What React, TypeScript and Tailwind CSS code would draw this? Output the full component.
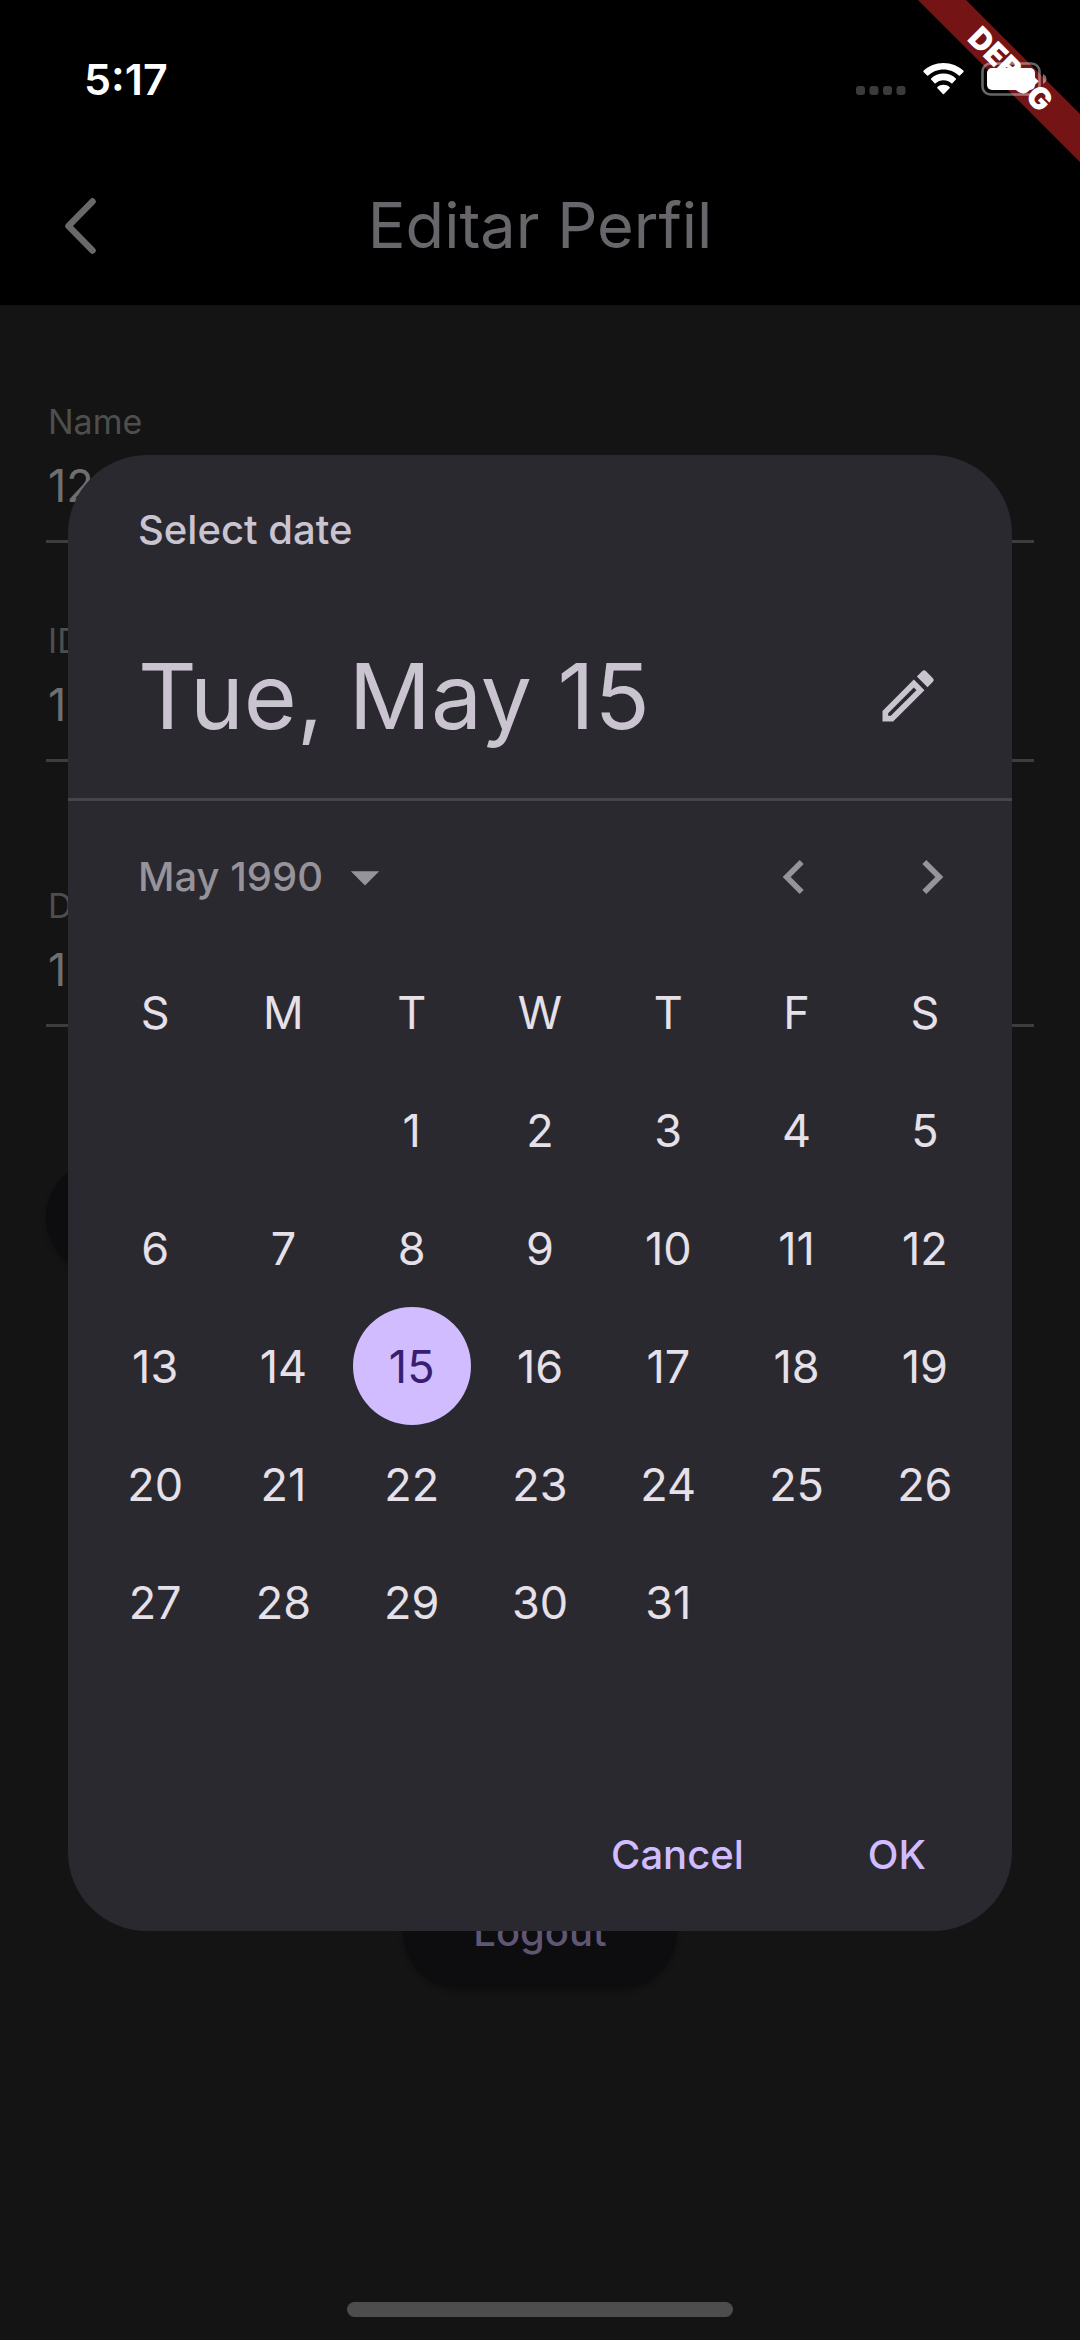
import { useState } from "react";

const WEEKDAYS = ["S", "M", "T", "W", "T", "F", "S"];
const WEEKDAY_NAMES = ["Sunday", "Monday", "Tuesday", "Wednesday", "Thursday", "Friday", "Saturday"];
const FIRST_WEEKDAY = 2;
const DAYS_IN_MONTH = 31;

const WEEKS: (number | null)[][] = Array.from({ length: 5 }, (_, week) =>
  Array.from({ length: 7 }, (_, column) => {
    const day = week * 7 + column - FIRST_WEEKDAY + 1;
    return day >= 1 && day <= DAYS_IN_MONTH ? day : null;
  }),
);

function DebugBanner() {
  return (
    <div className="pointer-events-none absolute top-0 right-0 size-[162px] overflow-hidden">
      <div className="absolute top-[52px] -left-[57px] flex h-[34px] w-[300px] rotate-45 items-center justify-center bg-[#751414] text-[30px] leading-none font-black text-white">
        DEBUG
      </div>
    </div>
  );
}

function StatusBar() {
  return (
    <div className="relative flex h-[146px] items-center justify-between bg-black pt-3 pr-[33px] pl-[84px]">
      <DebugBanner />
      <span className="text-[43px] leading-none font-semibold text-white">5:17</span>
      <div className="relative flex items-center">
        <svg className="mr-4 h-[34px] w-[50px]" viewBox="0 0 50 34" fill="#3b3b3b" aria-hidden="true">
          <rect x="0" y="24" width="9" height="9" rx="3" />
          <rect x="13.5" y="24" width="9" height="9" rx="3" />
          <rect x="27" y="24" width="9" height="9" rx="3" />
          <rect x="40.500" y="24" width="9" height="9" rx="3" />
        </svg>
        <svg className="mr-4 h-[34px] w-[43px]" viewBox="0 0 43 34" fill="#fff" aria-label="Wi-Fi" role="img">
          <path d="M21.500 7.500c5.900 0 11.300 2.300 15.300 6.100.3.300.8.300 1.100 0l3.600-3.700c.3-.3.300-.8 0-1.100C36.300 3.900 29.200 1 21.500 1S6.700 3.900 1.500 8.800c-.3.300-.3.800 0 1.100l3.600 3.700c.3.300.8.300 1.100 0 4-3.800 9.400-6.100 15.300-6.100z" />
          <path d="M21.500 18.300c3 0 5.700 1.100 7.800 3 .3.300.8.300 1.100 0l3.500-3.700c.3-.3.300-.8 0-1.100-3.300-3.100-7.600-4.900-12.400-4.900s-9.100 1.800-12.400 4.900c-.3.300-.3.800 0 1.100l3.500 3.700c.3.300.8.300 1.100 0 2.100-1.900 4.800-3 7.800-3z" />
          <path d="M27.600 26.200c.3-.3.300-.8 0-1.100-1.700-1.500-3.800-2.300-6.100-2.300s-4.400.8-6.100 2.300c-.3.300-.3.800 0 1.100l5.500 5.900c.3.300.8.300 1.100 0z" />
        </svg>
        <svg className="h-[34px] w-[66px]" viewBox="0 0 66 34" aria-label="Battery full" role="img">
          <rect x="1.500" y="1.500" width="57" height="31" rx="8" fill="none" stroke="#fff" strokeOpacity="0.400" strokeWidth="2.600" />
          <rect x="6" y="6" width="48" height="22" rx="5" fill="#fff" />
          <path d="M62 12c2.300 1 3.500 2.800 3.500 5s-1.200 4-3.500 5z" fill="#fff" fillOpacity="0.450" />
        </svg>
      </div>
    </div>
  );
}

function Header() {
  return (
    <header className="grid h-[159px] grid-cols-[160px_1fr_160px] items-center bg-black">
      <button type="button" aria-label="Back" className="flex h-full items-center pl-16">
        <svg className="h-14 w-9" viewBox="0 0 36 56" fill="none" stroke="#6a686b" strokeWidth="6.500" strokeLinecap="round" strokeLinejoin="round" aria-hidden="true">
          <path d="M28.500 3.500 4.500 28l24 24.500" />
        </svg>
      </button>
      <h1 className="text-center text-[63px] leading-none font-normal text-[#68666a]">Editar Perfil</h1>
    </header>
  );
}

function Field({ id, label, value }: { id: string; label: string; value: string }) {
  return (
    <div className="border-b-3 border-[#3d3d3f] pb-[26px] pl-0.5">
      <label htmlFor={id} className="block text-[34px] leading-10 text-[#4e4e4e]">
        {label}
      </label>
      <input
        id={id}
        type="text"
        defaultValue={value}
        className="mt-4 block h-14 w-full bg-transparent text-[45px] leading-14 text-[#6f6f6f] outline-none"
      />
    </div>
  );
}

function DatePicker() {
  const [selected, setSelected] = useState(15);

  return (
    <section role="dialog" aria-label="Select date" className="w-full rounded-[79px] bg-[#2b2930]">
      <div className="border-b-3 border-[#47444d] pt-[47px] pr-[70px] pb-[46px] pl-[70px]">
        <p className="text-[40px] leading-14 font-medium text-[#cac4d0]">Select date</p>
        <div className="mt-[82px] flex items-center justify-between">
          <h2 className="text-[91px] leading-[112px] font-normal text-[#cac4d0]">Tue, May 15</h2>
          <button type="button" aria-label="Switch to input">
            <svg className="size-[68px]" viewBox="0 0 24 24" fill="#cac4d0" aria-hidden="true">
              <path d="M3 17.250V21h3.750L17.810 9.940l-3.750-3.750L3 17.250zM5.920 19H5v-.92l9.060-9.060.92.920L5.920 19zM20.710 5.630l-2.340-2.340a.996.996 0 0 0-1.410 0l-1.830 1.830 3.750 3.750 1.830-1.830a.996.996 0 0 0 0-1.410z" />
            </svg>
          </button>
        </div>
      </div>

      <div className="flex h-[152px] items-center justify-between pr-[46px] pl-[70px]">
        <button type="button" className="flex items-center gap-2 text-[40px] leading-14 font-medium text-[#97939b]">
          May 1990
          <svg className="size-[68px]" viewBox="0 0 24 24" fill="#97939b" aria-hidden="true">
            <path d="m7 10 5 5 5-5z" />
          </svg>
        </button>
        <div className="flex gap-[70px]">
          <button type="button" aria-label="Previous month">
            <svg className="size-[68px]" viewBox="0 0 24 24" fill="#97939b" aria-hidden="true">
              <path d="M15.410 7.410 14 6l-6 6 6 6 1.410-1.410L10.830 12z" />
            </svg>
          </button>
          <button type="button" aria-label="Next month">
            <svg className="size-[68px]" viewBox="0 0 24 24" fill="#97939b" aria-hidden="true">
              <path d="M10 6 8.590 7.410 13.170 12l-4.580 4.590L10 18l6-6z" />
            </svg>
          </button>
        </div>
      </div>

      <div className="px-[23px] pb-[118px]">
        <table className="w-full table-fixed text-[45px] leading-none text-[#e6e0e9]">
          <thead>
            <tr className="h-[118px]">
              {WEEKDAYS.map((letter, i) => (
                <th key={WEEKDAY_NAMES[i]} scope="col" abbr={WEEKDAY_NAMES[i]} className="p-0 text-center font-normal">
                  {letter}
                </th>
              ))}
            </tr>
          </thead>
          <tbody>
            {WEEKS.map((week, w) => (
              <tr key={w}>
                {week.map((day, d) => (
                  <td key={d} className="h-[118px] p-0">
                    {day !== null && (
                      <button
                        type="button"
                        aria-pressed={day === selected}
                        onClick={() => setSelected(day)}
                        className={
                          day === selected
                            ? "mx-auto flex size-[118px] items-center justify-center rounded-full bg-[#d0bcff] text-[#381e72]"
                            : "mx-auto flex size-[118px] items-center justify-center rounded-full"
                        }
                      >
                        {day}
                      </button>
                    )}
                  </td>
                ))}
              </tr>
            ))}
          </tbody>
        </table>
      </div>

      <div className="flex h-[152px] items-center justify-end gap-[60px] pr-[54px] text-[40px] leading-14 font-medium text-[#d0bcff]">
        <button type="button" className="px-8 py-3">Cancel</button>
        <button type="button" className="px-8 py-3">OK</button>
      </div>
    </section>
  );
}

export default function App() {
  return (
    <div className="relative flex min-h-screen flex-col overflow-hidden bg-[#141414] font-['Inter',sans-serif]">
      <StatusBar />
      <Header />
      <main className="flex flex-1 flex-col px-[46px] pt-[97px]">
        <form className="flex flex-col">
          <div className="flex flex-col gap-[78px]">
            <Field id="name" label="Name" value="12" />
            <Field id="document" label="ID" value="1" />
          </div>
          <div className="mt-[124px]">
            <Field id="birth" label="D" value="1" />
          </div>
          <button type="button" aria-label="Save" className="mt-[134px] h-28 w-1/2 rounded-full bg-[#0d0d0f] shadow-md shadow-black/20" />
        </form>
        <button
          type="button"
          className="mt-[603px] h-28 self-center rounded-full bg-[#0d0d0f] px-[70px] text-[40px] leading-14 font-medium text-[#5f5674] shadow-md shadow-black/20"
        >
          Logout
        </button>
      </main>
      <div className="absolute inset-0 flex items-center px-[68px] pt-[46px]">
        <DatePicker />
      </div>
      <div className="mx-auto mb-[23px] h-[15px] w-[386px] rounded-full bg-[#4d4d4d]" />
    </div>
  );
}
